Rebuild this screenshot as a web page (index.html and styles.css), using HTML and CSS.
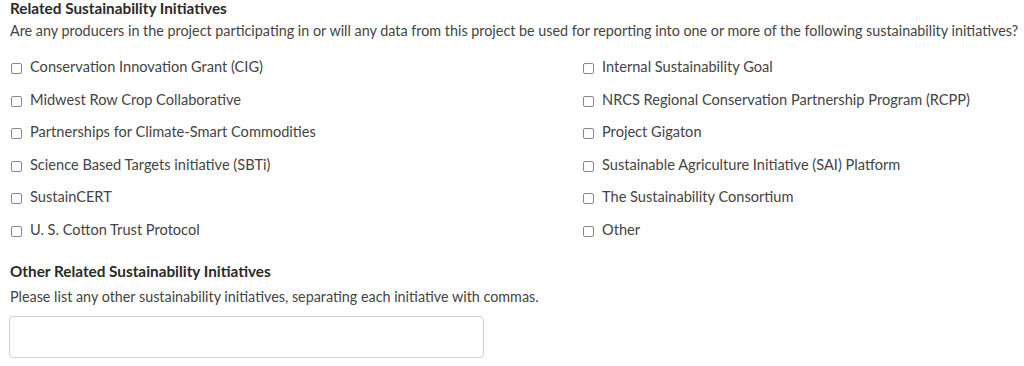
FILE: index.html
```html
<!DOCTYPE html>
<html lang="en">
<head>
    <meta charset="UTF-8">
    <title>Related Sustainability Initiatives</title>
    <link rel="stylesheet" href="styles.css">
</head>
<body>
    <div class="section">
        <h2>Related Sustainability Initiatives</h2>
        <p class="hint">Are any producers in the project participating in or will any data from this project be used for reporting into one or more of the following sustainability initiatives?</p>

        <div class="options">
            <label class="option"><input type="checkbox"> Conservation Innovation Grant (CIG)</label>
            <label class="option"><input type="checkbox"> Internal Sustainability Goal</label>
            <label class="option"><input type="checkbox"> Midwest Row Crop Collaborative</label>
            <label class="option"><input type="checkbox"> NRCS Regional Conservation Partnership Program (RCPP)</label>
            <label class="option"><input type="checkbox"> Partnerships for Climate-Smart Commodities</label>
            <label class="option"><input type="checkbox"> Project Gigaton</label>
            <label class="option"><input type="checkbox"> Science Based Targets initiative (SBTi)</label>
            <label class="option"><input type="checkbox"> Sustainable Agriculture Initiative (SAI) Platform</label>
            <label class="option"><input type="checkbox"> SustainCERT</label>
            <label class="option"><input type="checkbox"> The Sustainability Consortium</label>
            <label class="option"><input type="checkbox"> U. S. Cotton Trust Protocol</label>
            <label class="option"><input type="checkbox"> Other</label>
        </div>
    </div>

    <div class="section other">
        <h2>Other Related Sustainability Initiatives</h2>
        <p class="hint hint-other">Please list any other sustainability initiatives, separating each initiative with commas.</p>
        <input type="text" class="text-input">
    </div>
</body>
</html>
```

FILE: styles.css
```css
body {
    margin: 0;
    padding: 0 10px;
    background: #fff;
    font-family: Lato, "Open Sans", sans-serif;
    color: #444;
}

h2 {
    margin: 0;
    font-size: 15.3px;
    line-height: 16px;
    font-weight: bold;
    color: #2a2a2a;
}

.hint {
    margin: 5px 0 0;
    font-size: 14.35px;
    line-height: 20px;
    color: #444;
    white-space: nowrap;
}

.hint-other {
    margin-top: 8px;
}

.options {
    display: grid;
    grid-template-columns: 572px 1fr;
    row-gap: 12.6px;
    margin-top: 16px;
}

.option {
    display: flex;
    align-items: center;
    gap: 8px;
    font-size: 14.6px;
    line-height: 20px;
    color: #444;
}

.option input {
    appearance: none;
    width: 11px;
    height: 11px;
    margin: 3px 0 0 1px;
    border: 1px solid #888;
    border-radius: 2px;
    background: #fff;
}

.other {
    margin-top: 23px;
}

.text-input {
    display: block;
    box-sizing: border-box;
    width: 475px;
    height: 42px;
    margin: 9px 0 0 -1px;
    border: 1px solid #d0d0d0;
    border-radius: 4px;
}
```
